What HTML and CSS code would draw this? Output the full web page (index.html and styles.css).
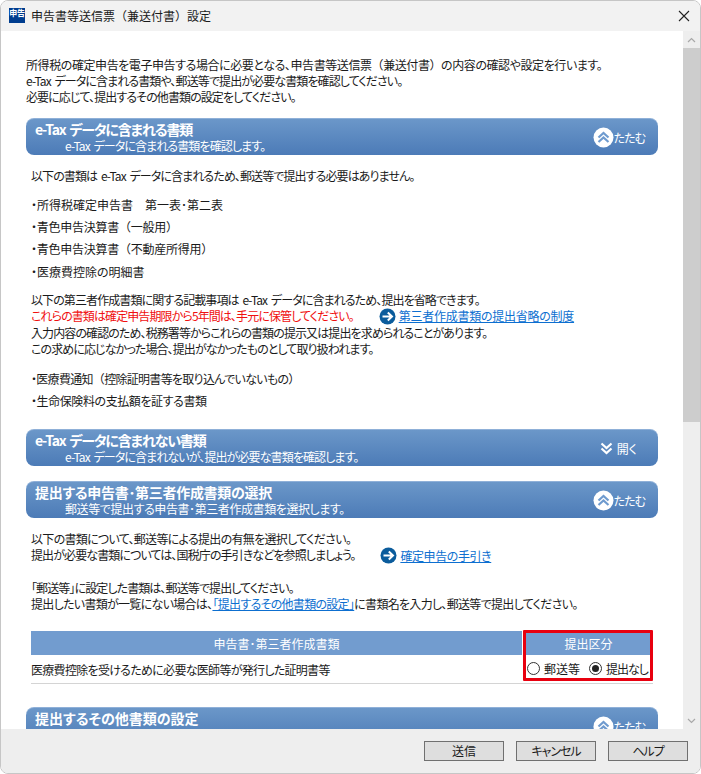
FILE: index.html
```html
<!DOCTYPE html>
<html lang="ja">
<head>
<meta charset="utf-8">
<title>申告書等送信票（兼送付書）設定</title>
<link rel="stylesheet" href="styles.css">
</head>
<body>
<div class="window">
  <header class="titlebar">
    <div class="appicon">申告</div>
    <div class="wintitle">申告書等送信票（兼送付書）設定</div>
    <svg class="close" width="12" height="12" viewBox="0 0 12 12"><path d="M1 1L11 11M11 1L1 11" stroke="#222" stroke-width="1.1" fill="none"/></svg>
  </header>
  <div class="middle">
    <main class="content">
      <p class="intro"><span class="ls-c">所得税の確定申告を電子申告する場合に必要となる、申告書等送信票<span class="fw">（</span>兼送付書<span class="fw">）</span>の内容の確認や設定を行います。</span><br><span class="ls-a">e-Tax データに含まれる書類や、郵送等で提出が必要な書類を確認してください。</span><br><span class="ls-a">必要に応じて、提出するその他書類の設定をしてください。</span></p>

      <section class="sechead">
        <div class="headtext"><div class="h-main ls-h1">e-Tax データに含まれる書類</div><div class="h-sub ls-a">e-Tax データに含まれる書類を確認します。</div></div>
        <div class="toggle"><svg class="roundicon" width="21" height="21" viewBox="0 0 21 21"><circle cx="10.5" cy="10.5" r="10" fill="#fff"/><path d="M5.5 10.5L10.5 6L15.5 10.5M5.5 15L10.5 10.5L15.5 15" stroke="#6f9bcf" stroke-width="2.2" fill="none"/></svg><span class="ls-t">たたむ</span></div>
      </section>
      <div class="body-a">
        <p class="line ls-a">以下の書類は e-Tax データに含まれるため、郵送等で提出する必要はありません。</p>
        <ul class="docs docs-first">
          <li>・所得税確定申告書　第一表･第二表</li>
          <li class="ls-d">・青色申告決算書<span class="fw">（</span>一般用<span class="fw">）</span></li>
          <li class="ls-d">・青色申告決算書<span class="fw">（</span>不動産所得用<span class="fw">）</span></li>
          <li>・医療費控除の明細書</li>
        </ul>
        <p class="para"><span class="ls-a">以下の第三者作成書類に関する記載事項は e-Tax データに含まれるため、提出を省略できます。</span><br><span class="warn ls-a">これらの書類は確定申告期限から5年間は、手元に保管してください。</span><span class="linkwrap l1"><svg class="arrow" width="17" height="17" viewBox="0 0 17 17"><circle cx="8.5" cy="8.5" r="8" fill="#0b5c9c"/><path d="M3.5 8.5H12.5M8.8 4.5L13 8.5L8.8 12.5" stroke="#fff" stroke-width="2" fill="none"/></svg><a class="ls-d" href="#">第三者作成書類の提出省略の制度</a></span><br><span class="ls-a">入力内容の確認のため、税務署等からこれらの書類の提示又は提出を求められることがあります。</span><br><span class="ls-a">この求めに応じなかった場合、提出がなかったものとして取り扱われます。</span></p>
        <ul class="docs docs-second">
          <li class="ls-b">・医療費通知<span class="fw">（</span>控除証明書等を取り込んでいないもの<span class="fw">）</span></li>
          <li class="ls-c">・生命保険料の支払額を証する書類</li>
        </ul>
      </div>

      <section class="sechead">
        <div class="headtext"><div class="h-main ls-h1">e-Tax データに含まれない書類</div><div class="h-sub ls-a">e-Tax データに含まれないが、提出が必要な書類を確認します。</div></div>
        <div class="toggle toggle-open"><svg width="13" height="13" viewBox="0 0 13 13"><path d="M1.5 1.5L6.5 6L11.5 1.5M1.5 6.5L6.5 11L11.5 6.5" stroke="#fff" stroke-width="2.2" fill="none"/></svg><span>開く</span></div>
      </section>

      <section class="sechead sechead-next">
        <div class="headtext"><div class="h-main ls-h2">提出する申告書･第三者作成書類の選択</div><div class="h-sub ls-c">郵送等で提出する申告書･第三者作成書類を選択します。</div></div>
        <div class="toggle"><svg class="roundicon" width="21" height="21" viewBox="0 0 21 21"><circle cx="10.5" cy="10.5" r="10" fill="#fff"/><path d="M5.5 10.5L10.5 6L15.5 10.5M5.5 15L10.5 10.5L15.5 15" stroke="#6f9bcf" stroke-width="2.2" fill="none"/></svg><span class="ls-t">たたむ</span></div>
      </section>
      <div class="body-c">
        <p class="para"><span class="ls-b">以下の書類について、郵送等による提出の有無を選択してください。</span><br><span class="ls-a">提出が必要な書類については、国税庁の手引きなどを参照しましょう。</span><span class="linkwrap l2"><svg class="arrow" width="17" height="17" viewBox="0 0 17 17"><circle cx="8.5" cy="8.5" r="8" fill="#0b5c9c"/><path d="M3.5 8.5H12.5M8.8 4.5L13 8.5L8.8 12.5" stroke="#fff" stroke-width="2" fill="none"/></svg><a class="ls-e" href="#">確定申告の手引き</a></span></p>
        <p class="para para-gap"><span class="ls-a">「郵送等」に設定した書類は、郵送等で提出してください。</span><br><span class="ls-b">提出したい書類が一覧にない場合は、<a href="#">「提出するその他書類の設定」</a>に書類名を入力し、郵送等で提出してください。</span></p>
        <div class="tablewrap">
          <div class="thead">
            <div class="th th-doc">申告書･第三者作成書類</div>
            <div class="th th-kind">提出区分</div>
          </div>
          <div class="trow">
            <div class="td-doc ls-b">医療費控除を受けるために必要な医師等が発行した証明書等</div>
            <div class="td-kind">
              <span class="radio"></span><span class="rlabel">郵送等</span>
              <span class="radio radio-on"></span><span class="rlabel ls-t">提出なし</span>
            </div>
          </div>
          <div class="redbox"></div>
        </div>
      </div>

      <section class="sechead sechead-last">
        <div class="headtext"><div class="h-main">提出するその他書類の設定</div><div class="h-sub">&nbsp;</div></div>
        <div class="toggle"><svg class="roundicon" width="21" height="21" viewBox="0 0 21 21"><circle cx="10.5" cy="10.5" r="10" fill="#fff"/><path d="M5.5 10.5L10.5 6L15.5 10.5M5.5 15L10.5 10.5L15.5 15" stroke="#6f9bcf" stroke-width="2.2" fill="none"/></svg><span class="ls-t">たたむ</span></div>
      </section>
    </main>
    <div class="scrollbar">
      <div class="sb-btn"><svg width="9" height="6" viewBox="0 0 9 6"><path d="M1 5L4.5 1.5L8 5" stroke="#a8a8a8" stroke-width="1.2" fill="none"/></svg></div>
      <div class="sb-thumb"></div>
      <div class="sb-track"></div>
      <div class="sb-btn"><svg width="9" height="6" viewBox="0 0 9 6"><path d="M1 1L4.5 4.5L8 1" stroke="#a8a8a8" stroke-width="1.2" fill="none"/></svg></div>
    </div>
  </div>
  <footer class="footer">
    <button class="btn" type="button">送信</button>
    <button class="btn ls-t" type="button">キャンセル</button>
    <button class="btn ls-t" type="button">ヘルプ</button>
  </footer>
</div>
</body>
</html>
```
FILE: styles.css
```css
* { box-sizing: border-box; }
html, body { margin: 0; padding: 0; background: #fff; }
body {
  font-family: "Noto Sans CJK JP", "Noto Sans", sans-serif;
  font-size: 12px;
  color: #1a1a1a;
  font-feature-settings: "palt";
}
.ls-a { letter-spacing: -0.9px; word-spacing: 2px; }
.ls-b { letter-spacing: -0.7px; }
.ls-c { letter-spacing: -0.42px; }
.ls-d { letter-spacing: -0.25px; }
.ls-e { letter-spacing: -0.4px; }
.ls-t { letter-spacing: -1px; }
.ls-h1 { letter-spacing: -1.2px; word-spacing: 2px; }
.ls-h2 { letter-spacing: -0.3px; }
.fw { font-feature-settings: normal; }
.window {
  width: 701px;
  height: 774px;
  border: 1px solid #c6c6c6;
  border-radius: 8px;
  overflow: hidden;
  display: flex;
  flex-direction: column;
  background: #fff;
}
.titlebar {
  height: 30px;
  flex: none;
  background: #f2f2f2;
  display: flex;
  align-items: center;
  padding: 0 10px 0 8px;
}
.appicon {
  width: 16px;
  height: 15px;
  background: #003d8f;
  color: #fff;
  font-size: 8px;
  font-weight: 700;
  line-height: 9px;
  text-align: center;
  letter-spacing: -0.2px;
  overflow: hidden;
  margin-top: -1px;
}
.wintitle { margin-left: 6px; flex: 1; font-size: 12px; line-height: 16px; font-feature-settings: normal; }
.middle { flex: 1; min-height: 0; display: flex; }
.content {
  flex: 1;
  min-width: 0;
  overflow: hidden;
  padding: 26px 25px 0 25px;
}
p { margin: 0; }
.intro { line-height: 16px; margin-bottom: 13px; }
.para { line-height: 16px; }
.sechead {
  height: 37px;
  border-radius: 8px;
  background: linear-gradient(#6b97c9, #4c7bb7);
  border-top: 1px solid #8fb0d8;
  color: #fff;
  display: flex;
  align-items: center;
  justify-content: space-between;
  padding: 0 13px 0 9px;
}
.sechead-next { margin-top: 15px; }
.sechead-last { margin-top: 23px; }
.headtext { display: flex; flex-direction: column; }
.h-main { font-size: 14px; font-weight: 700; line-height: 18px; margin-top: -1px; }
.h-sub { font-size: 12px; line-height: 15px; padding-left: 30px; }
.toggle { display: flex; align-items: center; gap: 0; font-size: 12px; }
.toggle-open { gap: 4px; padding-right: 8px; }
.roundicon { flex: none; }
.body-a { padding: 13px 0 17px 5px; }
.line { line-height: 16px; }
.docs { list-style: none; margin: 0; padding: 0; }
.docs li { line-height: 22.2px; }
.docs-first { margin-top: 10px; margin-bottom: 9px; }
.docs-second { margin-top: 11px; }
.warn { color: #f01010; }
a { color: #0d6fd0; text-decoration: underline; }
.linkwrap { display: inline-flex; align-items: center; gap: 3px; vertical-align: top; letter-spacing: 0; word-spacing: 0; }
.l1 { margin-left: 25px; }
.l2 { margin-left: 25px; }
.arrow { flex: none; }
.body-c { padding: 13px 0 0 5px; }
.para-gap { margin-top: 16px; }
.tablewrap { position: relative; margin-top: 19px; width: 622px; }
.thead { display: flex; gap: 2px; height: 24px; }
.th {
  background: #729ccf;
  color: #fff;
  display: flex;
  align-items: center;
  justify-content: center;
}
.th-doc { width: 491px; }
.th-kind { width: 129px; }
.trow {
  height: 29px;
  display: flex;
  align-items: center;
  border-bottom: 1px solid #d4d4d4;
}
.td-doc { width: 493px; }
.td-kind { display: flex; align-items: center; padding-left: 3px; margin-top: -1px; white-space: nowrap; }
.radio {
  width: 13px;
  height: 13px;
  border-radius: 50%;
  border: 1px solid #333;
  background: #fff;
  flex: none;
  position: relative;
}
.radio-on { margin-left: 9px; }
.radio-on::after {
  content: "";
  position: absolute;
  left: 2px;
  top: 2px;
  width: 7px;
  height: 7px;
  border-radius: 50%;
  background: #222;
}
.rlabel { margin-left: 4px; }
.redbox {
  position: absolute;
  left: 492px;
  top: -1px;
  width: 130px;
  height: 51px;
  border: 3px solid #e8000f;
  border-radius: 1px;
}
.scrollbar {
  width: 17px;
  flex: none;
  background: #eee;
  display: flex;
  flex-direction: column;
}
.sb-btn { height: 17px; flex: none; display: flex; align-items: center; justify-content: center; background: #eee; }
.sb-thumb { height: 374px; flex: none; background: #cdcdcd; }
.sb-track { flex: 1; }
.footer {
  height: 44px;
  flex: none;
  background: #eee;
  display: flex;
  justify-content: flex-end;
  align-items: flex-start;
  gap: 12px;
  padding: 12px 12px 0 0;
}
.btn {
  width: 80px;
  height: 20px;
  padding: 0;
  border: 1px solid #707070;
  border-radius: 0;
  background: #dedede;
  color: #1a1a1a;
  font-family: inherit;
  font-size: 12px;
  font-feature-settings: "palt";
  line-height: 16px;
}
```
